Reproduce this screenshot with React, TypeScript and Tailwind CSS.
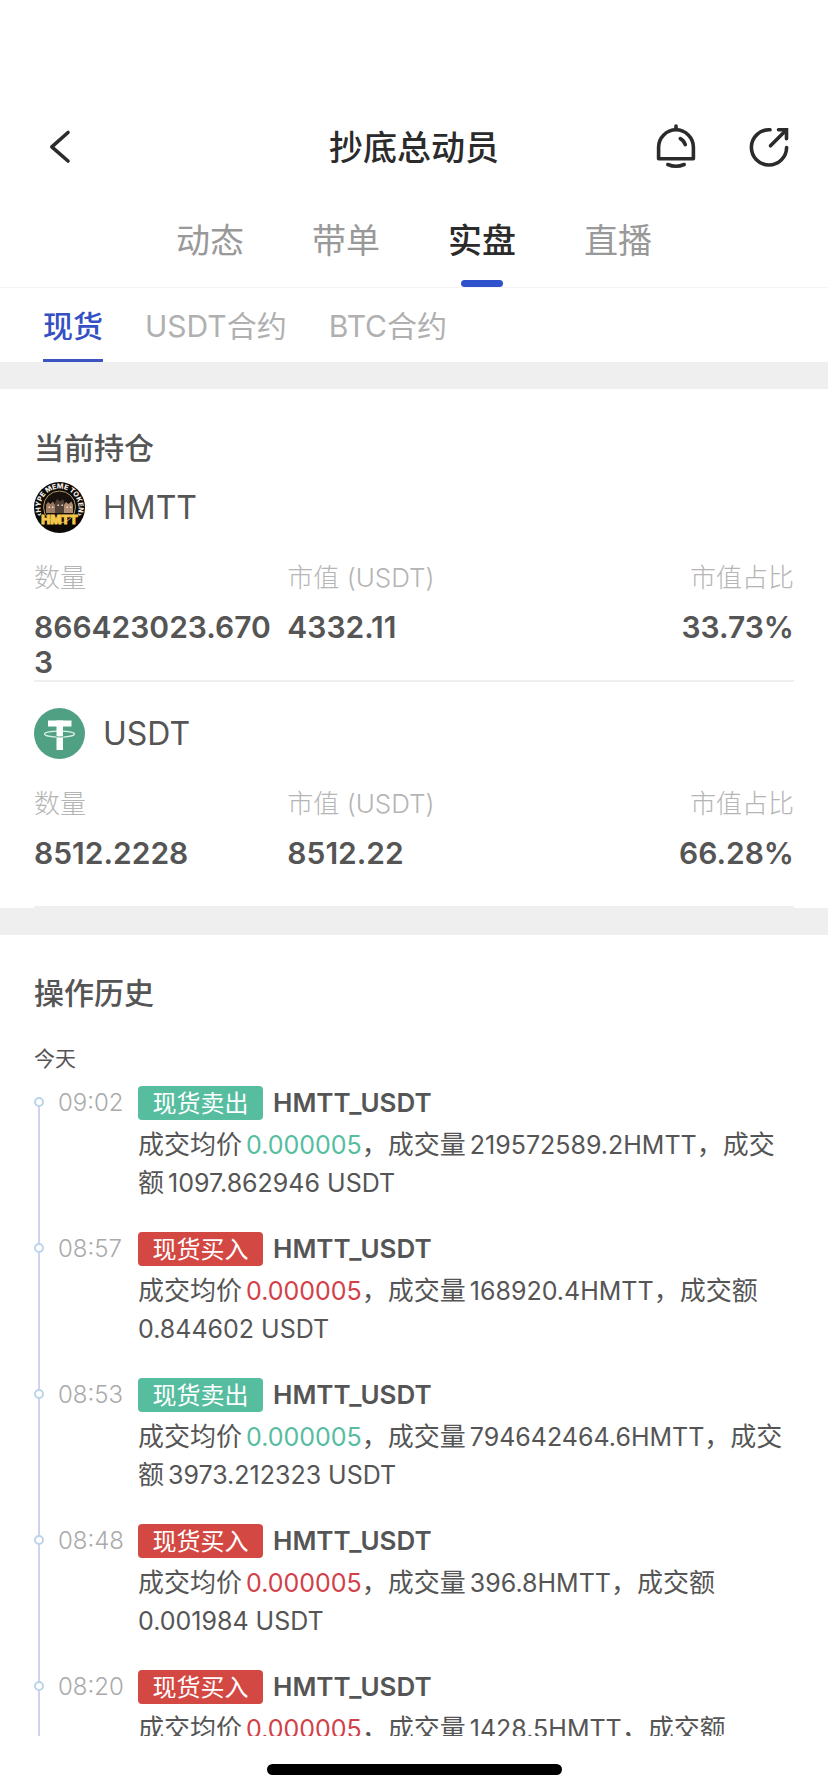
import { useState } from "react";
import clsx from "clsx";

const tabs = ["动态", "带单", "实盘", "直播"];
const markets = ["现货", "USDT合约", "BTC合约"];

const holdings = [
  { coin: "HMTT", amount: "866423023.6703", value: "4332.11", share: "33.73%" },
  { coin: "USDT", amount: "8512.2228", value: "8512.22", share: "66.28%" },
];

type Trade = {
  time: string;
  side: "buy" | "sell";
  price: string;
  volume: string;
  total: string;
};

const trades: Trade[] = [
  { time: "09:02", side: "sell", price: "0.000005", volume: "219572589.2HMTT", total: "1097.862946 USDT" },
  { time: "08:57", side: "buy", price: "0.000005", volume: "168920.4HMTT", total: "0.844602 USDT" },
  { time: "08:53", side: "sell", price: "0.000005", volume: "794642464.6HMTT", total: "3973.212323 USDT" },
  { time: "08:48", side: "buy", price: "0.000005", volume: "396.8HMTT", total: "0.001984 USDT" },
  { time: "08:20", side: "buy", price: "0.000005", volume: "1428.5HMTT", total: "0.007143 USDT" },
];

export default function App() {
  const [tab, setTab] = useState("实盘");
  const [market, setMarket] = useState("现货");

  return (
    <div className="flex h-screen flex-col bg-white font-['Inter','Noto_Sans_CJK_SC',sans-serif] text-[#555]">
      <header className="grid grid-cols-[1fr_auto_1fr] items-center px-[37px] pt-[104px] text-[#2b2b2b]">
        <button aria-label="返回" className="flex h-[86px] w-11 items-center">
          <BackIcon />
        </button>
        <h1 className="text-[34px] font-medium">抄底总动员</h1>
        <div className="flex items-center justify-end gap-[49px]">
          <button aria-label="提醒">
            <BellIcon />
          </button>
          <button aria-label="分享">
            <ShareIcon />
          </button>
        </div>
      </header>

      <nav className="flex justify-center gap-[68px] border-b border-[#f4f4f4]">
        {tabs.map((name) => (
          <button
            key={name}
            onClick={() => setTab(name)}
            className={clsx(
              "flex flex-col items-center gap-[15px] pt-[27px] text-[34px] leading-[48px]",
              tab === name ? "font-medium text-[#2b2b2b]" : "text-[#999]"
            )}
          >
            {name}
            <span className={clsx("h-[7px] w-[42px] rounded-full", tab === name && "bg-[#2f52cc]")} />
          </button>
        ))}
      </nav>

      <nav className="flex gap-[42px] px-[43px]">
        {markets.map((name) => (
          <button
            key={name}
            onClick={() => setMarket(name)}
            className={clsx(
              "border-b-[3px] pt-[18px] pb-[13px] text-[30px] leading-10",
              market === name
                ? "border-[#3a55c0] font-medium text-[#3450c4]"
                : "border-transparent text-[#b0b0b0]"
            )}
          >
            {name}
          </button>
        ))}
      </nav>

      <main className="min-h-0 flex-1 overflow-hidden">
        <section className="border-t-[27px] border-[#efefef] px-[34px] pt-[39px]">
          <h2 className="mb-[14px] text-[30px] leading-10 font-medium">当前持仓</h2>
          <div className="flex flex-col gap-[26px]">
            {holdings.map((item) => (
              <Holding key={item.coin} {...item} />
            ))}
          </div>
        </section>

        <section className="border-t-[27px] border-[#efefef] px-[34px] pt-[38px]">
          <h2 className="text-[30px] leading-10 font-medium">操作历史</h2>
          <h3 className="mt-[30px] mb-[11px] text-[21px] leading-8">今天</h3>
          <ol>
            {trades.map((trade) => (
              <TradeRow key={trade.time} {...trade} />
            ))}
          </ol>
        </section>
      </main>

      <footer className="flex h-14 shrink-0 justify-center pt-7">
        <div className="h-[11px] w-[295px] rounded-full bg-black" />
      </footer>
    </div>
  );
}

function Holding({ coin, amount, value, share }: (typeof holdings)[number]) {
  return (
    <div className="border-b-2 border-[#efefef]">
      <div className="flex items-center gap-[18px] text-[32px] leading-[51px]">
        {coin === "HMTT" ? <HmttLogo /> : <TetherLogo />}
        {coin}
      </div>
      <table className="mt-[27px] w-full table-fixed text-left">
        <thead>
          <tr className="text-[26px] leading-9 text-[#b5b5b5]">
            <th className="font-light">数量</th>
            <th className="font-light">市值 (USDT)</th>
            <th className="text-right font-light">市值占比</th>
          </tr>
        </thead>
        <tbody>
          <tr className="h-[84px] align-top text-[30px] leading-[35px] font-semibold">
            <td className="pt-[14px] pr-3 break-all">{amount}</td>
            <td className="pt-[14px]">{value}</td>
            <td className="pt-[14px] text-right">{share}</td>
          </tr>
        </tbody>
      </table>
    </div>
  );
}

function TradeRow({ time, side, price, volume, total }: Trade) {
  const sell = side === "sell";
  return (
    <li className="relative flex pb-[30px]">
      <span className="absolute top-4 left-1 h-full w-0.5 bg-[#cfd2f2]" />
      <span className="relative mt-[11px] size-[10px] rounded-full border-2 border-[#bcd4ea] bg-white" />
      <time className="ml-[14px] w-20 shrink-0 text-[24px] leading-[34px] font-light text-[#aaa]">
        {time}
      </time>
      <div className="min-w-0 flex-1">
        <div className="flex items-center gap-[10px]">
          <span
            className={clsx(
              "w-[125px] rounded pt-0.5 text-center text-[24px] leading-8 text-white",
              sell ? "bg-[#56bd9f]" : "bg-[#d34843]"
            )}
          >
            {sell ? "现货卖出" : "现货买入"}
          </span>
          <span className="text-[26px] leading-[34px] font-semibold">HMTT_USDT</span>
        </div>
        <p className="mt-[6px] text-[25px] leading-[38px]">
          <span className="mr-1 text-[26px]">成交均价</span>
          <span className={sell ? "text-[#56bd9f]" : "text-[#d2414a]"}>{price}</span>
          <span className="mr-1 text-[26px]">，成交量</span>
          {volume}
          <span className="mr-1 text-[26px]">，成交额</span>
          {total}
        </p>
      </div>
    </li>
  );
}

function BackIcon() {
  return (
    <svg
      className="h-[44px] w-[44px]"
      viewBox="0 0 44 44"
      fill="none"
      stroke="currentColor"
      strokeWidth="3.6"
      strokeLinecap="round"
    >
      <path d="M31 7.5 14.8 21.8 31 36" strokeLinejoin="round" />
    </svg>
  );
}

function BellIcon() {
  return (
    <svg
      className="h-12 w-11"
      viewBox="0 0 44 48"
      fill="none"
      stroke="currentColor"
      strokeWidth="3.6"
      strokeLinecap="round"
      strokeLinejoin="round"
    >
      <path d="M22 3v3" />
      <path d="M4.6 35.8V24.2a17.4 17.4 0 0 1 34.8 0v11.6z" />
      <path d="M26.3 15.6c2.3 1.2 4 3.2 5 6" />
      <path d="M13.8 41.5c5.2 2.2 11.2 2.2 16.4 0" />
    </svg>
  );
}

function ShareIcon() {
  return (
    <svg
      className="size-11"
      viewBox="0 0 44 44"
      fill="none"
      stroke="currentColor"
      strokeWidth="3.6"
      strokeLinecap="round"
    >
      <path d="M23 4.8A17.6 17.6 0 1 0 39.6 22.5" />
      <path d="M23.5 20.8 38.5 5.8" />
      <path d="M31.5 4.8h8v9" />
    </svg>
  );
}

function HmttLogo() {
  return (
    <svg className="size-[51px]" viewBox="0 0 102 102" aria-hidden="true">
      <defs>
        <path id="hmtt-ring" d="M16 66A38 38 0 1 1 86 66" />
      </defs>
      <circle cx="51" cy="51" r="51" fill="#0d0907" />
      <circle cx="51" cy="50" r="32" fill="#17100c" stroke="#a89a62" strokeWidth="2" />
      <text fill="#f3efe6" fontSize="14" fontWeight="800">
        <textPath href="#hmtt-ring" startOffset="50%" textAnchor="middle">
          ‹HYPE MEME TOKEN›
        </textPath>
      </text>
      <path d="M24 62V46l4-6 5 4 5-5 4 7v16z" fill="#9c7a63" />
      <path d="M42 62V42l4-8 6 5 6-5 3 8v20z" fill="#4f4038" />
      <path d="M60 62V46l4-6 5 4 6-5 3 7v16z" fill="#b08d73" />
      <path d="M29 49h3v3h-3zM36 49h3v3h-3zM47 45h3v3h-3zM55 45h3v3h-3zM65 49h3v3h-3zM72 49h3v3h-3z" fill="#f0ddc8" />
      <text x="51" y="84" fill="#f5c84c" stroke="#f5c84c" strokeWidth="2" fontSize="24" fontWeight="800" textAnchor="middle">
        HMTT
      </text>
    </svg>
  );
}

function TetherLogo() {
  return (
    <svg className="size-[51px]" viewBox="0 0 102 102" aria-hidden="true">
      <circle cx="51" cy="51" r="51" fill="#50a183" />
      <ellipse cx="51" cy="52" rx="30" ry="6" fill="none" stroke="#d9eee5" strokeWidth="2.5" />
      <rect x="28" y="25" width="47" height="12" fill="#fff" />
      <rect x="45" y="25" width="13" height="59" fill="#fff" />
      <path d="M44 57.5c5 .6 10 .6 15 0" fill="none" stroke="#50a183" strokeWidth="2" />
    </svg>
  );
}
